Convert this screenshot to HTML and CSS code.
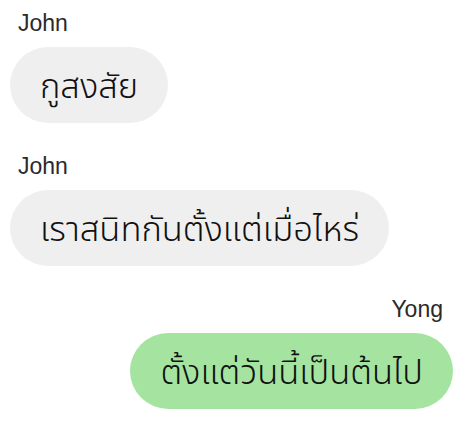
FILE: index.html
```html
<!DOCTYPE html>
<html lang="th">
<head>
<meta charset="utf-8">
<link rel="stylesheet" href="styles.css">
</head>
<body>
<div class="chat">
  <div class="msg">
    <div class="name">John</div>
    <div class="bubble">กูสงสัย</div>
  </div>
  <div class="msg">
    <div class="name">John</div>
    <div class="bubble">เราสนิทกันตั้งแต่เมื่อไหร่</div>
  </div>
  <div class="msg me">
    <div class="name">Yong</div>
    <div class="bubble green">ตั้งแต่วันนี้เป็นต้นไป</div>
  </div>
</div>
</body>
</html>
```
FILE: styles.css
```css
html, body { margin: 0; padding: 0; background: #fff; }
body { font-family: "Noto Sans Thai", "Noto Sans", "DejaVu Sans", sans-serif; color: #111; }
.chat { display: flex; flex-direction: column; padding: 9px 10px 0 10px; gap: 29px; }
.msg { display: flex; flex-direction: column; align-items: flex-start; }
.msg.me { align-items: flex-end; }
.name { font-family: "Liberation Sans", Arial, sans-serif; font-size: 23px; line-height: 28px; padding: 0 9px 0 8px; margin-bottom: 10px; color: #2a2a2a; }
.msg.me .name { padding: 0 10px 0 0; }
.bubble { background: #efefef; border-radius: 38px; height: 76px; box-sizing: border-box; padding: 6px 30px 0 30px; display: flex; align-items: center; font-size: 34.5px; line-height: 40px; font-weight: 300; }
.green { background: #a4e4a0; }
```
